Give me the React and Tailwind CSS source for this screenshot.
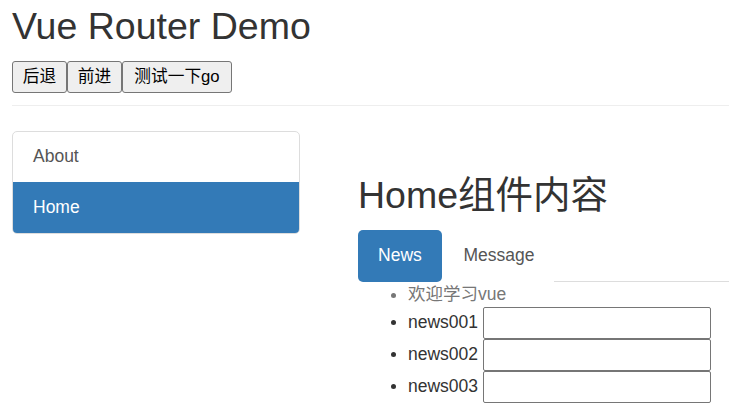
import React from 'react';

const font = "font-['Liberation_Sans','Noto_Sans_CJK_SC',sans-serif]";

export default function App() {
  const news = ['news001', 'news002', 'news003'];

  return (
    <div className={`${font} pl-3 text-[#333] text-[17.5px] leading-[25px] bg-white min-h-screen`}>
      {/* header */}
      <h2 className="pt-[6px] text-[37.5px] leading-[41px] font-normal">Vue Router Demo</h2>
      <div className="mt-[13.5px] flex">
        <button className="w-[55px] h-[32px] bg-[#efefef] border border-[#767676] rounded-[3px] text-[16.7px] text-black">后退</button>
        <button className="w-[55px] h-[32px] bg-[#efefef] border border-[#767676] rounded-[3px] text-[16.7px] text-black">前进</button>
        <button className="w-[110px] h-[32px] bg-[#efefef] border border-[#767676] rounded-[3px] text-[16.7px] text-black">测试一下go</button>
      </div>
      <hr className="mt-[12px] border-t border-[#eee]" />

      <div className="mt-[25px] flex">
        {/* side nav */}
        <div className="w-[288px] shrink-0 self-start border border-[#ddd] rounded-[5px] overflow-hidden">
          <div className="h-[50px] px-[20px] flex items-center text-[#555]">About</div>
          <div className="h-[51px] px-[20px] flex items-center bg-[#337ab7] text-white">Home</div>
        </div>

        {/* content */}
        <div className="ml-[58px] flex-1">
          <h2 className="pt-[44.5px] text-[37.5px] leading-[41px] font-normal">Home组件内容</h2>
          <div className="mt-[13.5px] flex h-[52px]">
            <div className="w-[84px] flex items-center justify-center bg-[#337ab7] text-white rounded-[5px]">News</div>
            <div className="ml-[2.5px] px-[19px] flex items-center text-[#555]">Message</div>
            <div className="flex-1 border-b border-[#ddd]" />
          </div>
          <ul className="list-disc pl-[50px]">
            <li className="text-[#777]">欢迎学习vue</li>
            {news.map((n) => (
              <li key={n}>
                {n}{' '}
                <input className="w-[228px] h-[32px] align-middle border border-[#767676] rounded-[2px] bg-white" />
              </li>
            ))}
          </ul>
        </div>
      </div>
    </div>
  );
}
